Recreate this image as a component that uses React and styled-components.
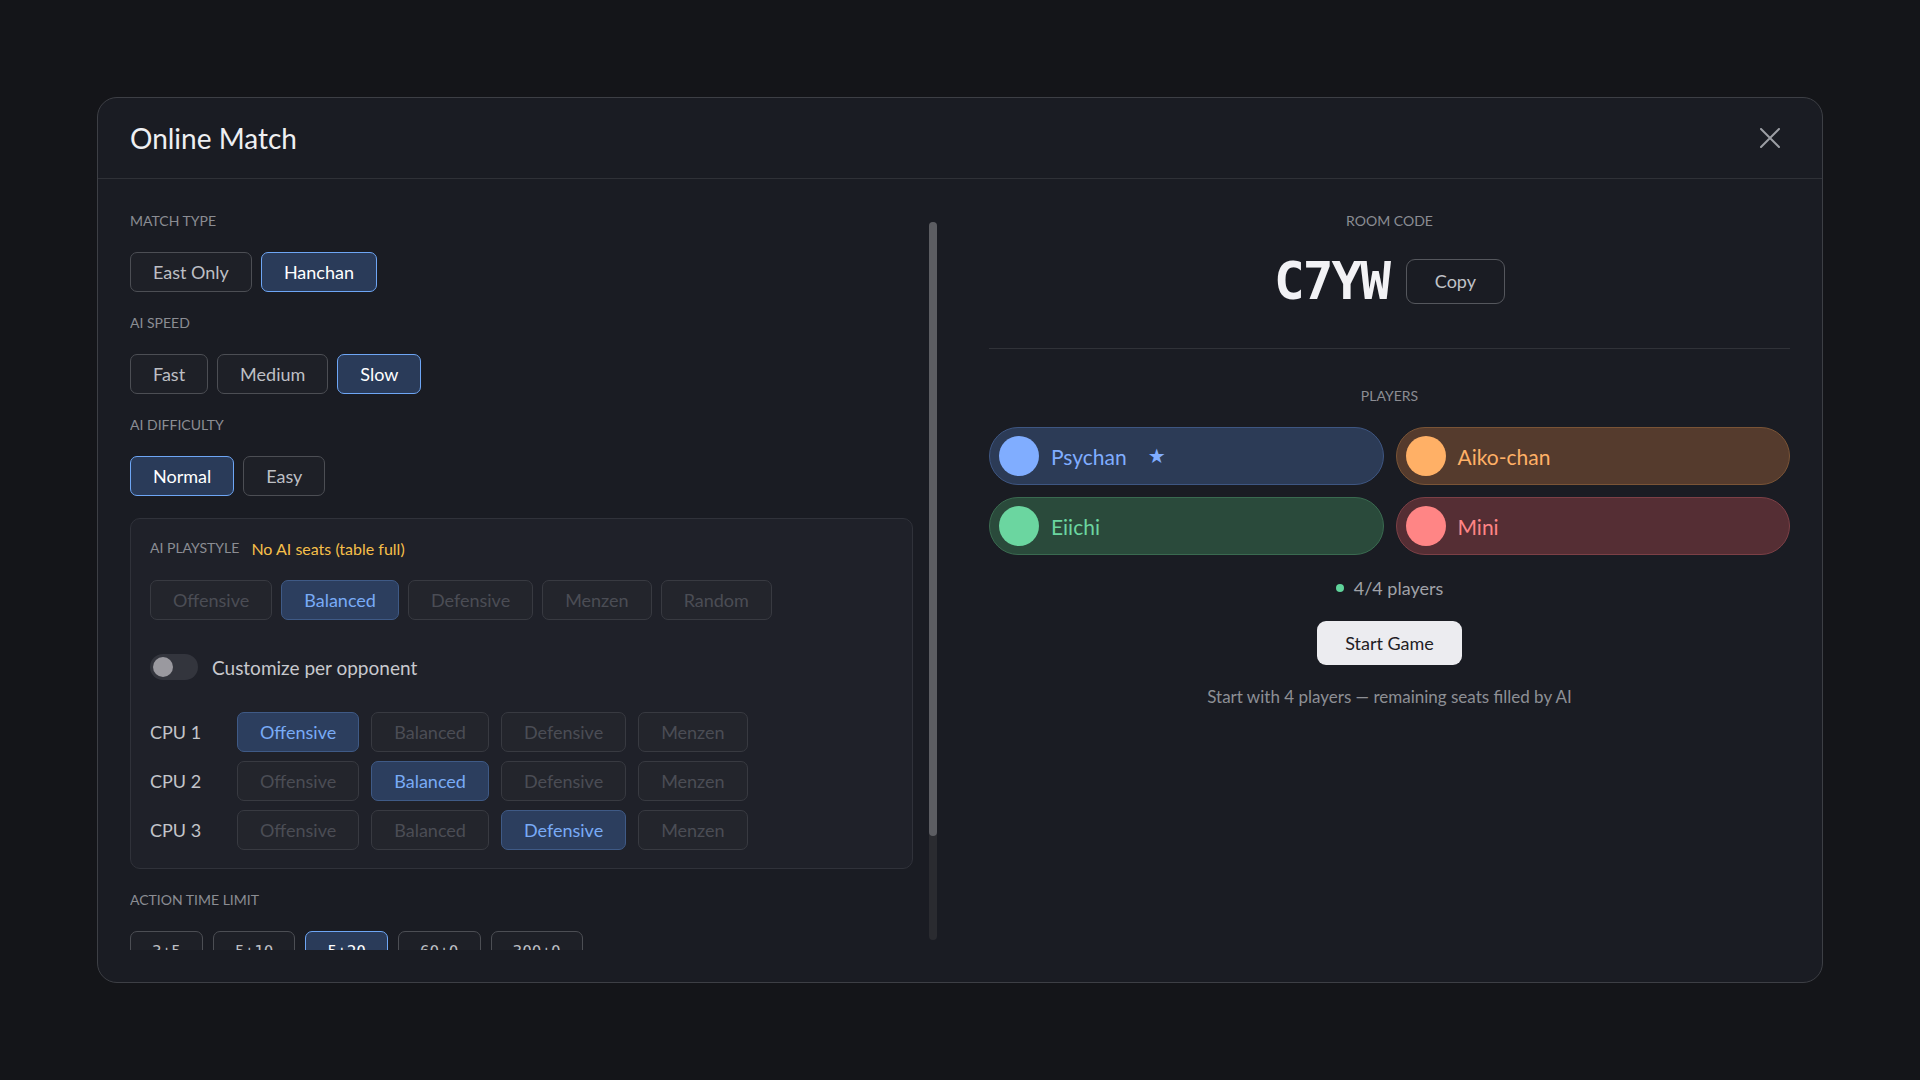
import React from 'react';
import styled, { createGlobalStyle, css } from 'styled-components';

const GlobalStyle = createGlobalStyle`
  html, body {
    margin: 0;
    padding: 0;
    background: #141519;
  }
  * {
    box-sizing: border-box;
  }
`;

const Page = styled.div`
  width: 100vw;
  height: 100vh;
  display: flex;
  align-items: center;
  justify-content: center;
  font-family: Lato, 'Open Sans', sans-serif;
`;

const Modal = styled.section`
  width: 1726px;
  height: 886px;
  display: flex;
  flex-direction: column;
  background: #1a1c23;
  border: 1px solid #3d3f45;
  border-radius: 20px;
  overflow: hidden;
`;

const Header = styled.header`
  height: 81px;
  flex: none;
  display: flex;
  align-items: center;
  justify-content: space-between;
  padding: 0 32px;
  border-bottom: 1px solid #2f3137;
`;

const Title = styled.h1`
  margin: 0;
  font-size: 28px;
  font-weight: 400;
  color: #eeeff2;
`;

const CloseButton = styled.button`
  width: 40px;
  height: 40px;
  display: flex;
  align-items: center;
  justify-content: center;
  background: none;
  border: none;
  padding: 0;
  color: #9c9ea4;
  cursor: pointer;
`;

const Body = styled.div`
  flex: 1;
  min-height: 0;
  display: grid;
  grid-template-columns: 807px 1fr;
  gap: 52px;
  padding: 33px 32px 32px;
`;

const LeftColumn = styled.div`
  display: flex;
  gap: 16px;
  min-height: 0;
`;

const Scroller = styled.div`
  flex: 1;
  overflow: hidden;
`;

const ScrollContent = styled.div`
  display: flex;
  flex-direction: column;
  gap: 22px;
  padding-bottom: 103px;
`;

const ScrollTrack = styled.div`
  width: 8px;
  margin: 10px 0;
  border-radius: 4px;
  background: #2a2b30;
`;

const ScrollThumb = styled.div`
  width: 100%;
  border-radius: 4px;
  background: #5c5d62;
`;

const Label = styled.div`
  font-size: 14px;
  line-height: 18px;
  color: #8b8d93;
  text-transform: uppercase;
`;

const ButtonRow = styled.div`
  display: flex;
  gap: ${p => p.$gap || 9}px;
`;

const Choice = styled.button`
  height: 40px;
  padding: 0 22px;
  border-radius: 7px;
  font-family: inherit;
  font-size: 18px;
  border: 1px solid #4c4e54;
  background: #1e2027;
  color: #bdbfc4;
  cursor: pointer;

  ${p => p.$mono && css`
    padding: 0 21px;
    font-family: 'DejaVu Sans Mono', 'Liberation Mono', monospace;
    font-size: 16px;
  `}

  ${p => p.$active && css`
    background: #2a3b59;
    border-color: #6ea6f5;
    color: #ffffff;
  `}

  ${p => p.$muted && css`
    background: #23252c;
    border-color: #383a41;
    color: #4b4d55;
  `}

  ${p => p.$muted && p.$active && css`
    background: #2c3e5e;
    border-color: #3f5a86;
    color: #79abf6;
  `}
`;

const PlaystyleBox = styled.div`
  display: flex;
  flex-direction: column;
  padding: 18px 19px 18px;
  background: #1f2129;
  border: 1px solid #30323a;
  border-radius: 10px;
`;

const BoxHeading = styled.div`
  display: flex;
  align-items: center;
  gap: 12px;
  height: 22px;
  margin-bottom: 21px;
`;

const Notice = styled.span`
  font-size: 16px;
  color: #f5bf4a;
`;

const ToggleRow = styled.label`
  display: flex;
  align-items: center;
  gap: 14px;
  margin: 34px 0 32px;
  font-size: 19px;
  color: #c8c9ce;
`;

const Toggle = styled.span`
  width: 48px;
  height: 26px;
  display: flex;
  align-items: center;
  padding: 0 3px;
  border-radius: 13px;
  background: #33353d;
`;

const Knob = styled.span`
  width: 20px;
  height: 20px;
  border-radius: 50%;
  background: #9a999f;
`;

const CpuGrid = styled.div`
  display: flex;
  flex-direction: column;
  gap: 9px;
`;

const CpuRow = styled.div`
  display: flex;
  align-items: center;
  gap: 12px;
`;

const CpuName = styled.span`
  width: 75px;
  font-size: 18px;
  color: #c3c5ca;
`;

const RightColumn = styled.div`
  display: flex;
  flex-direction: column;
  align-items: center;
  gap: 22px;
`;

const CodeRow = styled.div`
  height: 58px;
  display: flex;
  align-items: center;
  gap: 17px;
`;

const Code = styled.span`
  font-family: 'DejaVu Sans Mono', 'Liberation Mono', monospace;
  font-weight: 700;
  font-size: 51px;
  line-height: 1;
  letter-spacing: -2px;
  color: #f2f2f5;
`;

const CopyButton = styled.button`
  width: 99px;
  height: 45px;
  border-radius: 9px;
  border: 1.5px solid #55575d;
  background: transparent;
  font-family: inherit;
  font-size: 18px;
  color: #c0c2c7;
`;

const Divider = styled.hr`
  align-self: stretch;
  margin: 16px 0;
  border: none;
  border-top: 1px solid #303238;
`;

const PlayerGrid = styled.div`
  align-self: stretch;
  display: grid;
  grid-template-columns: 1fr 1fr;
  gap: 12px;
`;

const tones = {
  blue: { bg: '#2c3b56', border: '#3e5682', fg: '#80adff' },
  orange: { bg: '#553b2d', border: '#7a5436', fg: '#ffb066' },
  green: { bg: '#2a4a3b', border: '#3a6a50', fg: '#6bd6a0' },
  red: { bg: '#552e34', border: '#7c4046', fg: '#ff8585' },
};

const Pill = styled.div`
  height: 58px;
  display: flex;
  align-items: center;
  gap: 12px;
  padding: 0 9px;
  border-radius: 29px;
  background: ${p => tones[p.$tone].bg};
  border: 1px solid ${p => tones[p.$tone].border};
  color: ${p => tones[p.$tone].fg};
`;

const Avatar = styled.span`
  width: 40px;
  height: 40px;
  border-radius: 50%;
  background: ${p => tones[p.$tone].fg};
`;

const PlayerName = styled.span`
  font-size: 21px;
`;

const HostStar = styled.span`
  margin-left: 9px;
  font-family: 'DejaVu Sans', sans-serif;
  font-size: 20px;
`;

const Status = styled.div`
  display: flex;
  align-items: center;
  gap: 10px;
  font-size: 18px;
  line-height: 22px;
  color: #a0a2a8;
`;

const Dot = styled.span`
  width: 8px;
  height: 8px;
  border-radius: 50%;
  background: #5fd39a;
`;

const StartButton = styled.button`
  height: 44px;
  padding: 0 28px;
  border: none;
  border-radius: 9px;
  background: #ececf0;
  font-family: inherit;
  font-size: 18px;
  color: #1f2024;
`;

const Hint = styled.p`
  margin: 0;
  font-size: 17px;
  line-height: 20px;
  color: #8d8f95;
`;

const styles = ['Offensive', 'Balanced', 'Defensive', 'Menzen'];

const cpus = [
  { name: 'CPU 1', pick: 'Offensive' },
  { name: 'CPU 2', pick: 'Balanced' },
  { name: 'CPU 3', pick: 'Defensive' },
];

const players = [
  { name: 'Psychan', tone: 'blue', host: true },
  { name: 'Aiko-chan', tone: 'orange' },
  { name: 'Eiichi', tone: 'green' },
  { name: 'Mini', tone: 'red' },
];

const Options = ({ items, value, muted, mono, gap }) => (
  <ButtonRow $gap={gap}>
    {items.map(item => (
      <Choice key={item} $active={item === value} $muted={muted} $mono={mono}>{item}</Choice>
    ))}
  </ButtonRow>
);

const CloseIcon = () => (
  <svg width="20" height="20" viewBox="0 0 20 20" fill="none" stroke="currentColor" strokeWidth="2" strokeLinecap="round">
    <path d="M1 1L19 19M19 1L1 19" />
  </svg>
);

export default function App() {
  return (
    <Page>
      <GlobalStyle />
      <Modal>
        <Header>
          <Title>Online Match</Title>
          <CloseButton aria-label="Close"><CloseIcon /></CloseButton>
        </Header>
        <Body>
          <LeftColumn>
            <Scroller>
              <ScrollContent>
                <Label>Match Type</Label>
                <Options items={['East Only', 'Hanchan']} value="Hanchan" />
                <Label>AI Speed</Label>
                <Options items={['Fast', 'Medium', 'Slow']} value="Slow" />
                <Label>AI Difficulty</Label>
                <Options items={['Normal', 'Easy']} value="Normal" />

                <PlaystyleBox>
                  <BoxHeading>
                    <Label>AI Playstyle</Label>
                    <Notice>No AI seats (table full)</Notice>
                  </BoxHeading>
                  <Options items={[...styles, 'Random']} value="Balanced" muted />
                  <ToggleRow>
                    <Toggle><Knob /></Toggle>
                    Customize per opponent
                  </ToggleRow>
                  <CpuGrid>
                    {cpus.map(cpu => (
                      <CpuRow key={cpu.name}>
                        <CpuName>{cpu.name}</CpuName>
                        <ButtonRow $gap={12}>
                          {styles.map(s => (
                            <Choice key={s} $muted $active={s === cpu.pick}>{s}</Choice>
                          ))}
                        </ButtonRow>
                      </CpuRow>
                    ))}
                  </CpuGrid>
                </PlaystyleBox>

                <Label>Action Time Limit</Label>
                <Options items={['3+5', '5+10', '5+20', '60+0', '300+0']} value="5+20" mono gap={10} />
              </ScrollContent>
            </Scroller>
            <ScrollTrack>
              <ScrollThumb style={{ height: `${(614 / 718) * 100}%` }} />
            </ScrollTrack>
          </LeftColumn>

          <RightColumn>
            <Label>Room Code</Label>
            <CodeRow>
              <Code>C7YW</Code>
              <CopyButton>Copy</CopyButton>
            </CodeRow>
            <Divider />
            <Label>Players</Label>
            <PlayerGrid>
              {players.map(p => (
                <Pill key={p.name} $tone={p.tone}>
                  <Avatar $tone={p.tone} />
                  <PlayerName>{p.name}</PlayerName>
                  {p.host && <HostStar>★</HostStar>}
                </Pill>
              ))}
            </PlayerGrid>
            <Status><Dot />4/4 players</Status>
            <StartButton>Start Game</StartButton>
            <Hint>Start with 4 players — remaining seats filled by AI</Hint>
          </RightColumn>
        </Body>
      </Modal>
    </Page>
  );
}
